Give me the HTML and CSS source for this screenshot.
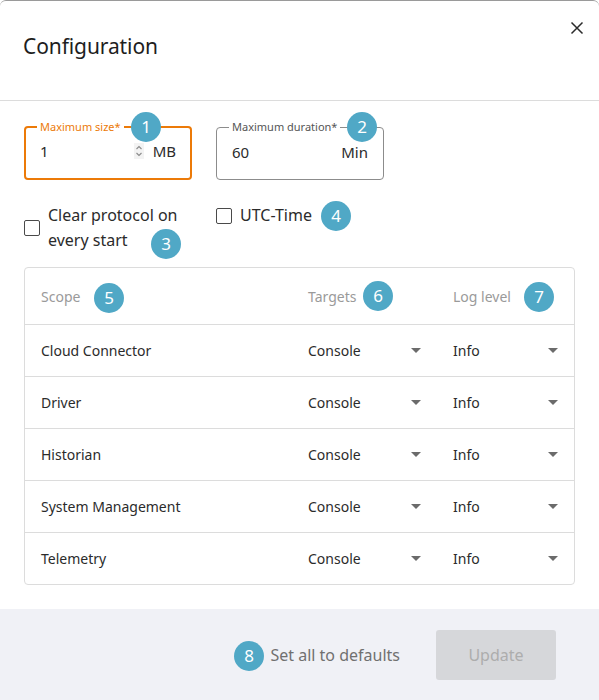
FILE: index.html
```html
<!DOCTYPE html>
<html lang="en">
<head>
<meta charset="utf-8">
<title>Configuration</title>
<link rel="stylesheet" href="styles.css">
</head>
<body>
<div class="dialog">
  <header class="header">
    <h1 class="title">Configuration</h1>
    <button class="close" aria-label="Close">
      <svg width="14" height="14" viewBox="0 0 14 14"><path d="M1.5 1.5 L12.5 12.5 M12.5 1.5 L1.5 12.5" stroke="#2b2b2b" stroke-width="1.5" fill="none"/></svg>
    </button>
  </header>

  <main class="body">
    <div class="fields">
      <fieldset class="field field-active">
        <legend>Maximum size*</legend>
        <div class="field-inner">
          <span class="value">1</span>
          <span class="spin">
            <svg width="8" height="14" viewBox="0 0 8 14"><path d="M1.5 5 L4 2.5 L6.5 5 M1.5 9 L4 11.5 L6.5 9" stroke="#8a8a8a" stroke-width="1.1" fill="none"/></svg>
          </span>
          <span class="unit">MB</span>
        </div>
      </fieldset>
      <fieldset class="field">
        <legend>Maximum duration*</legend>
        <div class="field-inner">
          <span class="value">60</span>
          <span class="unit">Min</span>
        </div>
      </fieldset>
    </div>

    <div class="checks">
      <label class="check check-center">
        <span class="box"></span>
        <span class="check-text">Clear protocol on every start</span>
      </label>
      <label class="check">
        <span class="box"></span>
        <span class="check-text">UTC-Time</span>
      </label>
    </div>

    <div class="table">
      <div class="row head">
        <div class="cell">Scope</div>
        <div class="cell">Targets</div>
        <div class="cell">Log level</div>
      </div>
      <div class="row">
        <div class="cell">Cloud Connector</div>
        <div class="cell sel"><span>Console</span><i class="caret"></i></div>
        <div class="cell sel"><span>Info</span><i class="caret"></i></div>
      </div>
      <div class="row">
        <div class="cell">Driver</div>
        <div class="cell sel"><span>Console</span><i class="caret"></i></div>
        <div class="cell sel"><span>Info</span><i class="caret"></i></div>
      </div>
      <div class="row">
        <div class="cell">Historian</div>
        <div class="cell sel"><span>Console</span><i class="caret"></i></div>
        <div class="cell sel"><span>Info</span><i class="caret"></i></div>
      </div>
      <div class="row">
        <div class="cell">System Management</div>
        <div class="cell sel"><span>Console</span><i class="caret"></i></div>
        <div class="cell sel"><span>Info</span><i class="caret"></i></div>
      </div>
      <div class="row last">
        <div class="cell">Telemetry</div>
        <div class="cell sel"><span>Console</span><i class="caret"></i></div>
        <div class="cell sel"><span>Info</span><i class="caret"></i></div>
      </div>
    </div>
  </main>

  <footer class="footer">
    <button class="link">Set all to defaults</button>
    <button class="primary" disabled>Update</button>
  </footer>

  <span class="badge b1">1</span>
  <span class="badge b2">2</span>
  <span class="badge b3">3</span>
  <span class="badge b4">4</span>
  <span class="badge b5">5</span>
  <span class="badge b6">6</span>
  <span class="badge b7">7</span>
  <span class="badge b8">8</span>
</div>
</body>
</html>
```

FILE: styles.css
```css
* { box-sizing: border-box; }
html, body { margin: 0; padding: 0; background: #ffffff; }
body {
  font-family: "Noto Sans", "Open Sans", sans-serif;
  color: #2b2b2b;
  width: 599px;
  height: 700px;
  overflow: hidden;
}
.dialog {
  position: relative;
  width: 599px;
  height: 701px;
  border-top: 1px solid #9a9a9a;
  border-radius: 6px 6px 0 0;
  background: #fff;
  display: flex;
  flex-direction: column;
}
.header {
  height: 100px;
  border-bottom: 1px solid #dcdcdc;
  display: flex;
  align-items: flex-start;
  justify-content: space-between;
  padding: 0 14px 0 23px;
}
.title {
  margin: 30px 0 0;
  font-size: 21px;
  font-weight: 400;
  line-height: 30px;
  color: #1e1e1e;
  letter-spacing: -0.1px;
}
.close {
  margin-top: 19px;
  border: 0;
  background: none;
  padding: 0;
  width: 16px;
  height: 16px;
  display: flex;
  align-items: center;
  justify-content: center;
}
.body {
  padding: 19px 24px 0;
  flex: 1;
}
.fields {
  display: flex;
  gap: 24px;
}
.field {
  margin: 0;
  width: 168px;
  height: 60px;
  padding: 0 15px;
  border: 1px solid #8c8c8c;
  border-radius: 4px;
}
.field legend {
  font-size: 11px;
  line-height: 14px;
  padding: 0 3px;
  margin-left: -3px;
  color: #555;
}
.field-active { border-color: #ec7a08; border-width: 2px; padding: 0 14px; }
.field-active legend { color: #ec7a08; }
.field-inner {
  display: flex;
  align-items: center;
  height: 35px;
  font-size: 15px;
  color: #2b2b2b;
}
.field-active .field-inner { height: 34px; }
.value { flex: 1; }
.spin {
  width: 10px;
  height: 16px;
  background: #f3f3f3;
  display: flex;
  align-items: center;
  justify-content: center;
  margin-right: 9px;
}
.unit { color: #2b2b2b; }

.checks {
  display: flex;
  gap: 24px;
  margin-top: 23px;
}
.check {
  width: 168px;
  display: flex;
  align-items: flex-start;
  gap: 8px;
  font-size: 16px;
  line-height: 25px;
  color: #2b2b2b;
}
.check-center { align-items: center; }
.check .box {
  flex: none;
  width: 16px;
  height: 16px;
  border: 1px solid #4a4a4a;
  border-radius: 2px;
  margin-top: 5px;
}
.check-center .box { margin-top: 0; }
.check-text { display: block; }

.table {
  margin-top: 14px;
  border: 1px solid #dcdcdc;
  border-radius: 4px;
}
.row {
  display: grid;
  grid-template-columns: 267px 145px 1fr;
  height: 52px;
  border-bottom: 1px solid #dcdcdc;
  font-size: 14px;
  color: #2b2b2b;
}
.row.head { height: 57px; color: #9a9a9a; }
.row.last { border-bottom: 0; height: 51px; }
.cell {
  display: flex;
  align-items: center;
  padding: 0 16px;
}
.sel { justify-content: space-between; }
.caret {
  width: 0;
  height: 0;
  border-left: 5px solid transparent;
  border-right: 5px solid transparent;
  border-top: 5px solid #6b6b6b;
}

.footer {
  height: 92px;
  background: #f0f1f6;
  display: flex;
  align-items: center;
  justify-content: flex-end;
  padding-right: 43px;
  gap: 36px;
}
.link {
  border: 0;
  background: none;
  font-family: inherit;
  font-size: 16px;
  color: #707070;
  padding: 0;
}
.primary {
  width: 120px;
  height: 50px;
  border: 0;
  border-radius: 3px;
  background: #d6d7da;
  color: #adadad;
  font-family: inherit;
  font-size: 16px;
}

.badge {
  position: absolute;
  width: 30px;
  height: 30px;
  border-radius: 50%;
  background: #50a8c6;
  color: #fff;
  font-size: 17px;
  line-height: 30px;
  text-align: center;
}
.b1 { left: 131px; top: 111px; }
.b2 { left: 347px; top: 111px; }
.b3 { left: 151px; top: 228px; }
.b4 { left: 321px; top: 200px; }
.b5 { left: 94px; top: 282px; }
.b6 { left: 363px; top: 280px; }
.b7 { left: 524px; top: 281px; }
.b8 { left: 234px; top: 640px; }
```
